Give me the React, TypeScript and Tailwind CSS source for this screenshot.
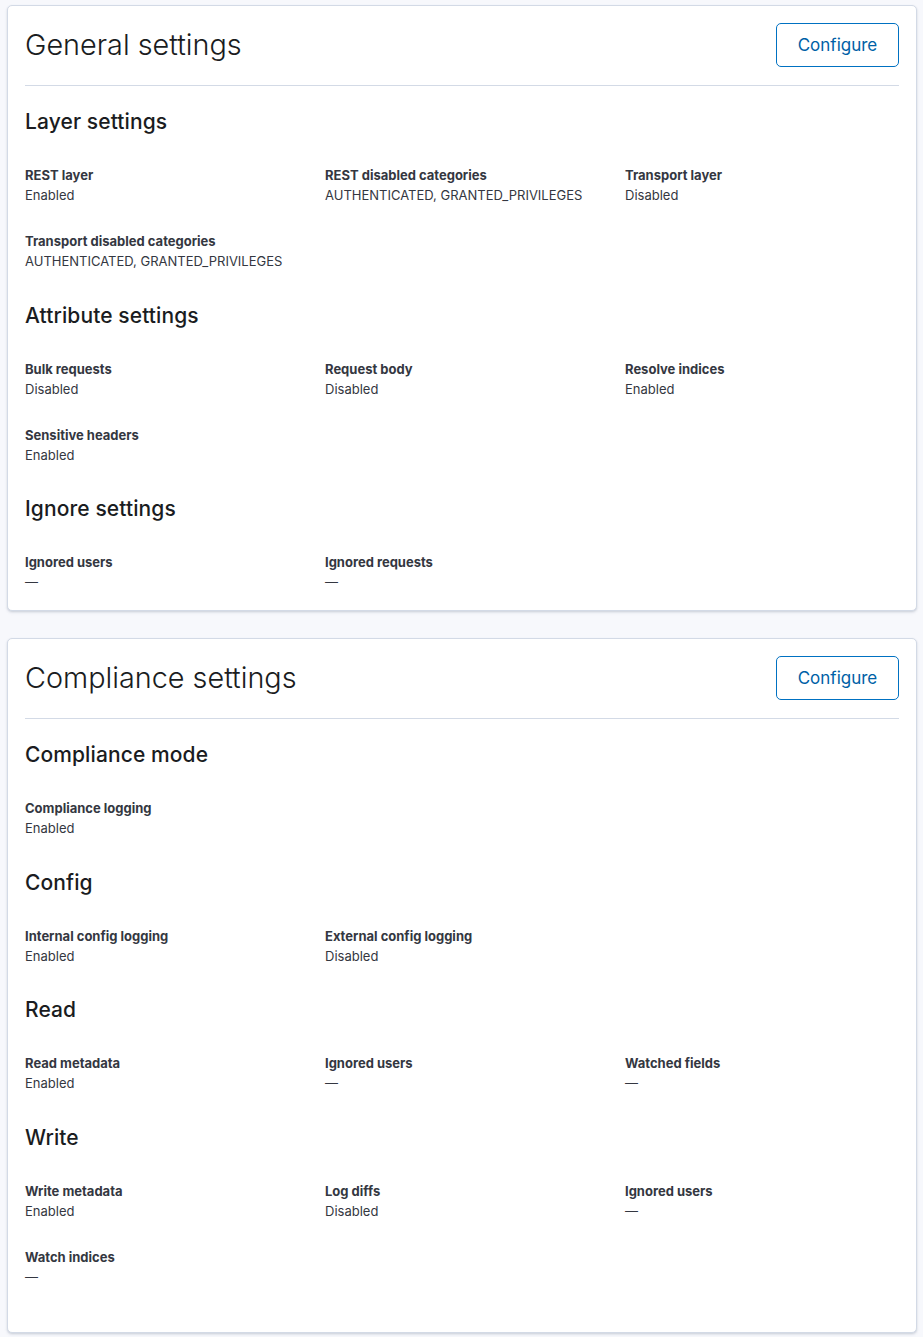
import React from "react";

type Item = { label: string; value: string };
type Group = { title: string; items: Item[] };

const general: Group[] = [
  {
    title: "Layer settings",
    items: [
      { label: "REST layer", value: "Enabled" },
      { label: "REST disabled categories", value: "AUTHENTICATED, GRANTED_PRIVILEGES" },
      { label: "Transport layer", value: "Disabled" },
      { label: "Transport disabled categories", value: "AUTHENTICATED, GRANTED_PRIVILEGES" },
    ],
  },
  {
    title: "Attribute settings",
    items: [
      { label: "Bulk requests", value: "Disabled" },
      { label: "Request body", value: "Disabled" },
      { label: "Resolve indices", value: "Enabled" },
      { label: "Sensitive headers", value: "Enabled" },
    ],
  },
  {
    title: "Ignore settings",
    items: [
      { label: "Ignored users", value: "—" },
      { label: "Ignored requests", value: "—" },
    ],
  },
];

const compliance: Group[] = [
  {
    title: "Compliance mode",
    items: [{ label: "Compliance logging", value: "Enabled" }],
  },
  {
    title: "Config",
    items: [
      { label: "Internal config logging", value: "Enabled" },
      { label: "External config logging", value: "Disabled" },
    ],
  },
  {
    title: "Read",
    items: [
      { label: "Read metadata", value: "Enabled" },
      { label: "Ignored users", value: "—" },
      { label: "Watched fields", value: "—" },
    ],
  },
  {
    title: "Write",
    items: [
      { label: "Write metadata", value: "Enabled" },
      { label: "Log diffs", value: "Disabled" },
      { label: "Ignored users", value: "—" },
      { label: "Watch indices", value: "—" },
    ],
  },
];

const SettingsGroup = ({ group, first }: { group: Group; first: boolean }) => (
  <div className={first ? "mt-[24px]" : "mt-[32.6px]"}>
    <h3 className="text-[21px] font-medium leading-[24px] tracking-[0.1px] text-[#1a1c21]">{group.title}</h3>
    <dl className="mt-[31px] grid grid-cols-3 gap-x-[26px] gap-y-[26px]">
      {group.items.map((item) => (
        <div key={item.label}>
          <dt className="text-[13px] font-bold leading-[20px] text-[#343741]">{item.label}</dt>
          <dd className="text-[13px] leading-[20px] text-[#343741]">{item.value}</dd>
        </div>
      ))}
    </dl>
  </div>
);

const SettingsCard = ({ title, groups, extraBottom }: { title: string; groups: Group[]; extraBottom?: boolean }) => (
  <section
    className={`rounded-[5px] border border-[#d3dae6] bg-white px-[17px] pt-[17px] shadow-[0_1px_2px_rgba(152,162,179,0.35),0_2px_3px_rgba(152,162,179,0.15)] ${
      extraBottom ? "pb-[45px]" : "pb-[18px]"
    }`}
  >
    <div className="flex h-[44px] items-center justify-between">
      <h2 className="text-[28.8px] font-light leading-[34px] text-[#1a1c21]">{title}</h2>
      <button className="h-[44px] w-[123px] rounded-[5px] border border-[#0071c2] pt-px text-[17px] text-[#0061a6]">
        Configure
      </button>
    </div>
    <div className="mt-[18px] h-px bg-[#d3dae6]" />
    {groups.map((g, i) => (
      <SettingsGroup key={g.title} group={g} first={i === 0} />
    ))}
  </section>
);

export default function App() {
  return (
    <div
      className="min-h-[1337px] bg-[#f7f8fc] pl-[7px] pr-[6px] pt-[5px]"
      style={{ fontFamily: "Inter, 'Noto Sans', sans-serif" }}
    >
      <div className="flex flex-col gap-[27px]">
        <SettingsCard title="General settings" groups={general} />
        <SettingsCard title="Compliance settings" groups={compliance} extraBottom />
      </div>
    </div>
  );
}
